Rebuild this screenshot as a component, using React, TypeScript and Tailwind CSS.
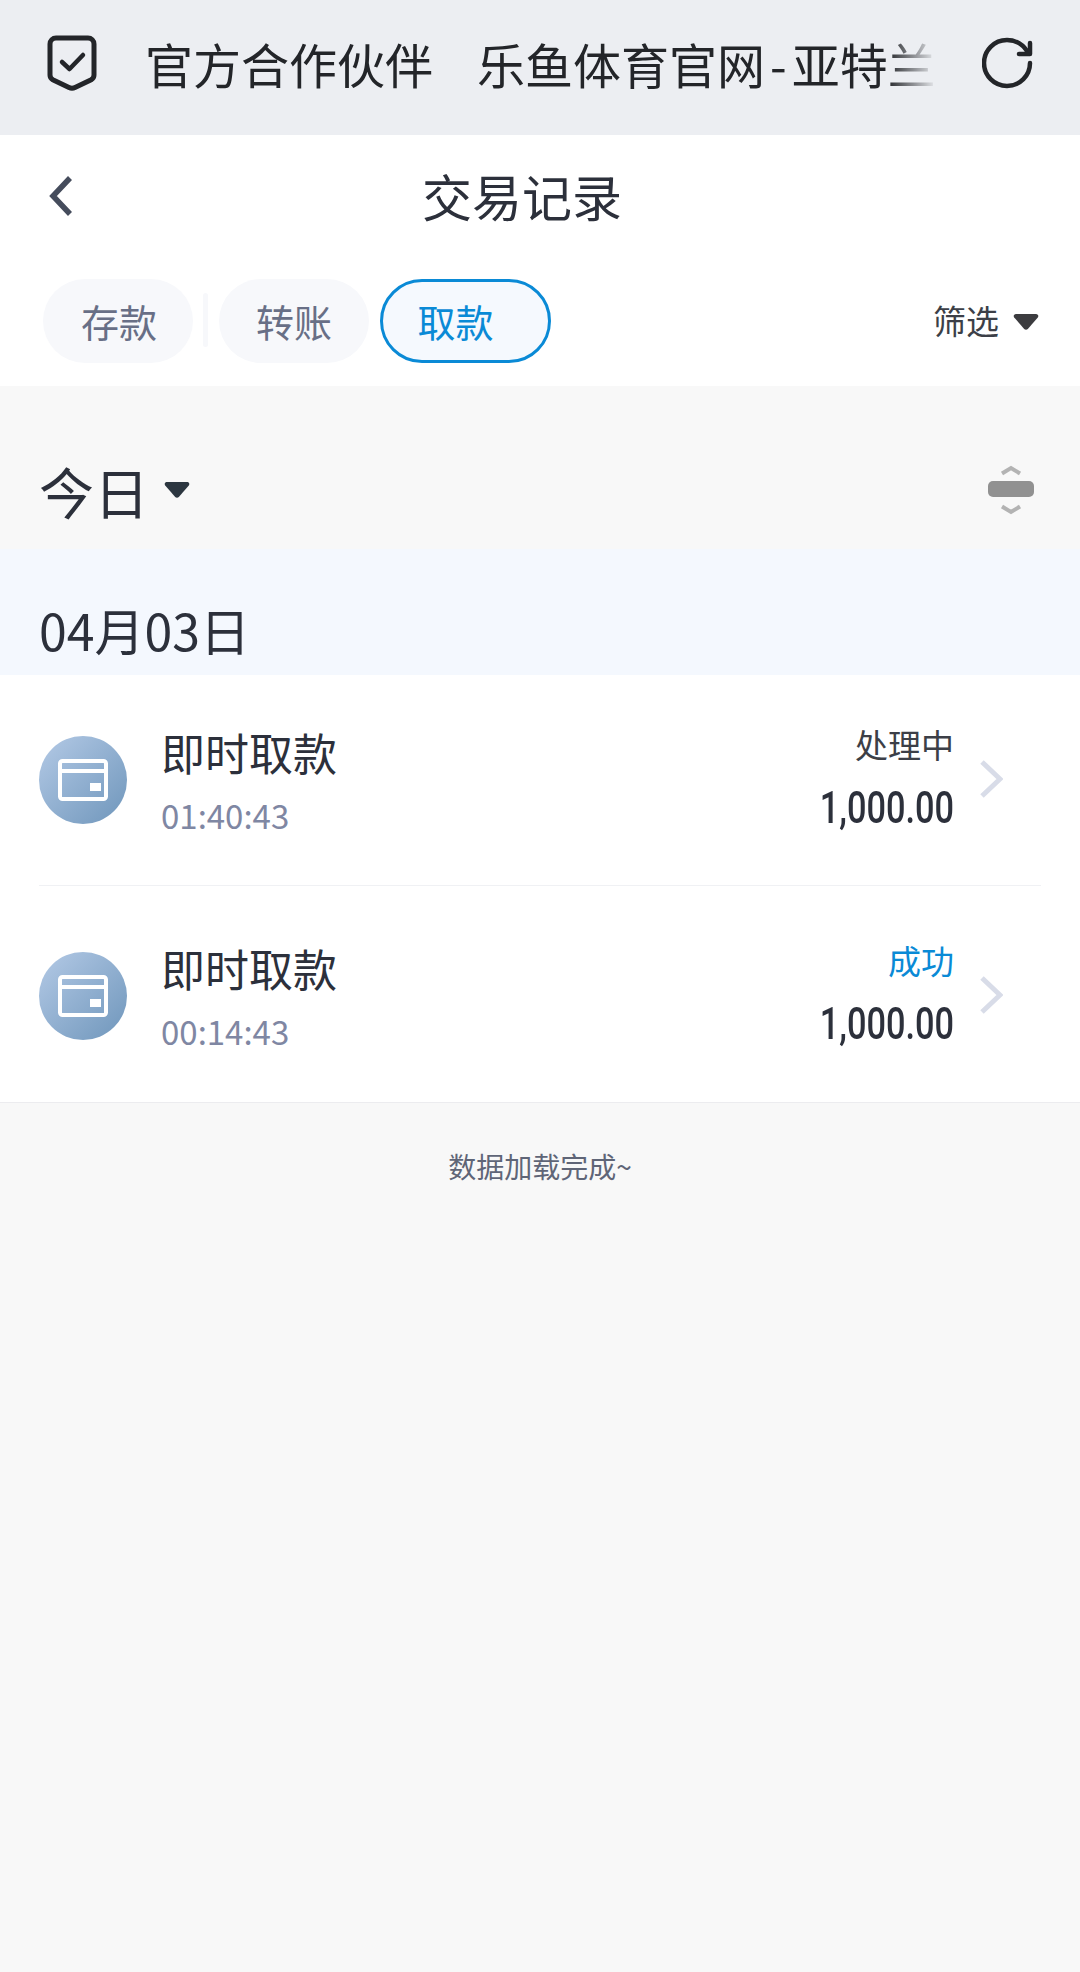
const CJK = "font-['Noto_Sans_CJK_SC','Noto_Sans',sans-serif]";

function Caret({ className }: { className: string }) {
  return (
    <svg viewBox="0 0 26 18" className={className} fill="currentColor">
      <path d="M3 1h20c2 0 3 2 1.800 3.400L14.800 16c-1 1-2.600 1-3.600 0L1.200 4.400C0 3 1 1 3 1z" />
    </svg>
  );
}

function Card() {
  return (
    <div className="flex h-[88px] w-[88px] shrink-0 items-center justify-center rounded-full bg-gradient-to-br from-[#b4cae6] to-[#6f96bb]">
      <svg viewBox="0 0 50 42" className="h-[42px] w-[50px]" fill="none">
        <rect x="2" y="2" width="46" height="38" rx="2.500" stroke="#fff" strokeWidth="4" />
        <rect x="2" y="10" width="46" height="4" fill="#fff" />
        <rect x="32" y="24" width="11" height="8" fill="#fff" />
      </svg>
    </div>
  );
}

function Row({ time, status, statusClass, border }: { time: string; status: string; statusClass: string; border?: boolean }) {
  return (
    <div className={border ? "mx-[39px] flex h-[211px] items-center border-b border-[#f0f1f4]" : "mx-[39px] flex h-[216px] items-center pt-[3px]"}>
      <Card />
      <div className="ml-[34px] flex flex-col pb-[2px]">
        <span className="text-[44px] leading-[62px] text-[#2c303b]">即时取款</span>
        <span className="mt-[10px] text-[33px] leading-[44px] text-[#7f87a3]">{time}</span>
      </div>
      <div className="ml-auto flex flex-col items-end pb-[3px]">
        <span className={`text-[33px] leading-[46px] ${statusClass}`}>{status}</span>
        <span className="mt-[13px] origin-right scale-x-[0.78] font-['Roboto',sans-serif] text-[44px] leading-[56px] font-medium text-[#2c303b]">
          1,000.00
        </span>
      </div>
      <svg viewBox="0 0 24 40" className="mr-[38px] mb-[2px] ml-[25px] h-[40px] w-[24px]" fill="none">
        <path d="M3 3l18 17L3 37" stroke="#d8dce8" strokeWidth="5" />
      </svg>
    </div>
  );
}

export default function App() {
  return (
    <div className={`${CJK} flex min-h-[1972px] w-[1080px] flex-col bg-[#f8f8f8]`}>
      {/* Partner banner */}
      <div className="flex h-[135px] items-center bg-[#eceef2] pb-[10px] text-[#232529]">
        <svg viewBox="0 0 50 56" className="ml-[47px] h-[56px] w-[50px]" fill="none" stroke="#232529">
          <path d="M9 3h32a6 6 0 0 1 6 6v31c0 2-1 3.700-2.800 4.700L28 52.500c-2 1-4 1-6 0L5.800 44.700C4 43.700 3 42 3 40V9A6 6 0 0 1 9 3z" strokeWidth="5" />
          <path d="M15 27l7.500 7L36 20" strokeWidth="4.500" strokeLinecap="round" strokeLinejoin="round" />
        </svg>
        <div className="ml-[48px] w-[800px] whitespace-nowrap text-[48px] leading-[60px] [mask-image:linear-gradient(to_right,#000_742px,transparent_792px)]">
          官方合作伙伴<span className="ml-[44px]">乐鱼体育官网<span className="mx-[5px]">-</span>亚特兰</span>
        </div>
        <svg viewBox="0 0 52 52" className="ml-[37px] h-[52px] w-[52px]" fill="none" stroke="#232529" strokeWidth="4.500" strokeLinecap="round" strokeLinejoin="round">
          <path d="M48 26c0 12.500-10 23-23 23S2 38.500 2 26 12 3 25 3c9 0 17 5 21 13" />
          <path d="M48 6v11H37" />
        </svg>
      </div>

      {/* Title and tabs */}
      <div className="bg-white">
        <div className="flex h-[125px] items-center pb-[6px]">
          <svg viewBox="0 0 26 42" className="mt-[2px] ml-[48px] h-[42px] w-[26px]" fill="none">
            <path d="M22 3L5 21l17 18" stroke="#454c5c" strokeWidth="5.500" />
          </svg>
          <span className="ml-[348px] text-[50px] leading-[64px] text-[#2c303b]">交易记录</span>
        </div>
        <div className="flex h-[126px] items-start pl-[43px]">
          <div className="mt-[19px] flex h-[84px] w-[150px] items-center justify-center rounded-full bg-[#f7f8fb] pb-[2px] pl-[2px] text-[38px] text-[#686f86]">存款</div>
          <div className="mt-[33px] ml-[10px] h-[54px] w-[5px] rounded-full bg-[#f7f8fb]" />
          <div className="mt-[19px] ml-[11px] flex h-[84px] w-[150px] items-center justify-center rounded-full bg-[#f7f8fb] pb-[2px] text-[38px] text-[#686f86]">转账</div>
          <div className="mt-[19px] ml-[11px] flex h-[84px] w-[171px] items-center justify-center rounded-full border-[3px] border-[#0a8ad6] bg-[#f5f9fe] pr-[20px] pb-[2px] text-[38px] text-[#0a8ad6]">取款</div>
          <div className="mt-[19px] mr-[41px] ml-auto flex h-[84px] items-center text-[33px] text-[#3c3f47]">
            筛选
            <Caret className="mt-[2px] ml-[14px] h-[18px] w-[26px] text-[#3c3c3f]" />
          </div>
        </div>
      </div>

      {/* Range selector */}
      <div className="flex h-[163px] items-center pt-[44px] pl-[39px]">
        <span className="text-[55px] leading-[72px] text-[#2c303b]">今日</span>
        <Caret className="ml-[15px] h-[18px] w-[26px] text-[#2c3640]" />
        <svg viewBox="0 0 46 50" className="mr-[46px] ml-auto h-[50px] w-[46px]" fill="none">
          <path d="M14 8.500L23 3l9 5.500M14 41.500L23 47l9-5.500" stroke="#b3b3b3" strokeWidth="4" />
          <rect x="0" y="16" width="46" height="16" rx="5" fill="#919191" />
        </svg>
      </div>

      {/* Date band */}
      <div className="flex h-[126px] items-end bg-[#f4f8fe] pb-[14px] pl-[39px]">
        <span className="text-[50px] leading-[64px] text-[#2c303b]">04月03日</span>
      </div>

      {/* Records */}
      <div className="border-b border-[#ececef] bg-white">
        <Row time="01:40:43" status="处理中" statusClass="text-[#3c3f47]" border />
        <Row time="00:14:43" status="成功" statusClass="text-[#0a8ad6]" />
      </div>

      <div className="mt-[45px] text-center text-[28px] leading-[36px] text-[#5f6577]">数据加载完成~</div>
    </div>
  );
}
